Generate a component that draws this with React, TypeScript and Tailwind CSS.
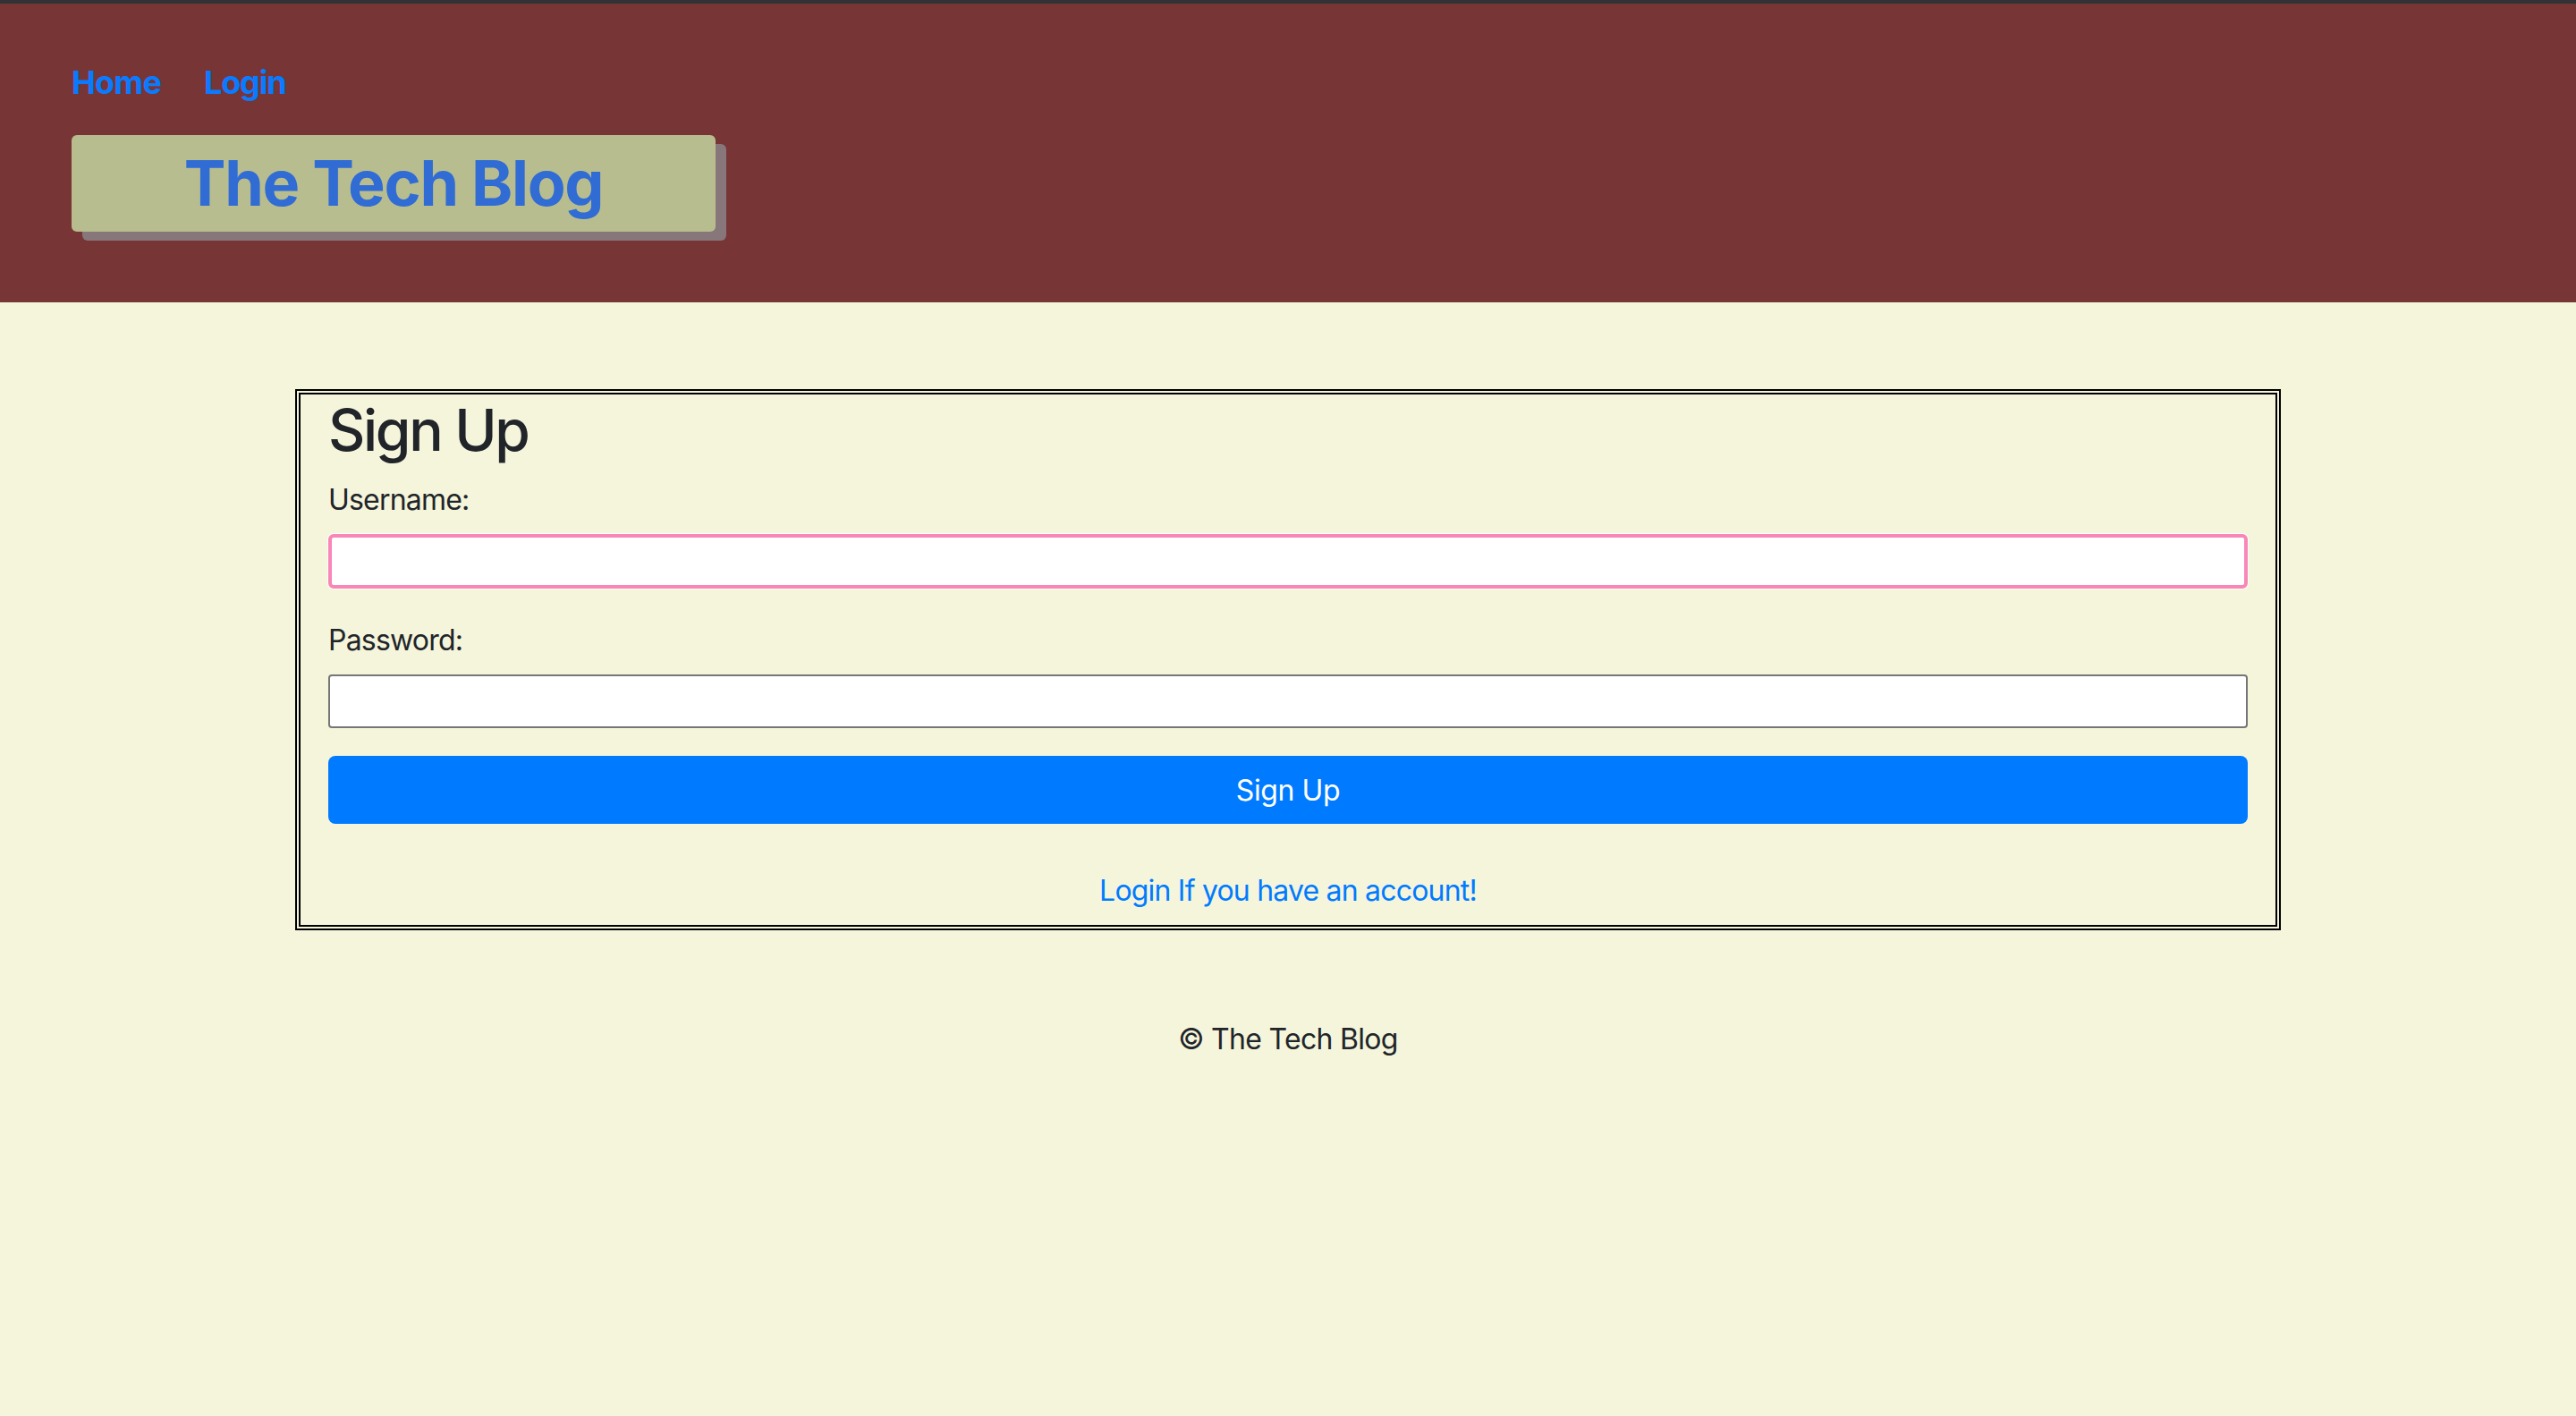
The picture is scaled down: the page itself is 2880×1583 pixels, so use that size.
import React from "react";

export default function App() {
  return (
    <div
      className="min-h-screen w-full bg-[#f5f5dc] text-[#212529]"
      style={{ fontFamily: "Inter, 'Noto Sans', sans-serif" }}
    >
      <div className="h-[4px] bg-[#303236]" />
      <header className="h-[334px] bg-[#773536] pl-[80px] pt-[61px]">
        <nav className="flex gap-[48px] text-[36px] leading-[54px] font-bold text-[#0a7bff]">
          <a href="#" className="tracking-[-0.8px]">Home</a>
          <a href="#" className="tracking-[-1.2px]">Login</a>
        </nav>
        <div className="mt-[32px] flex h-[108px] w-[720px] items-center justify-center rounded-[6px] bg-[#b8bd8f] shadow-[12px_10px_0_#87777b]">
          <h1 className="text-[70px] font-bold leading-none tracking-[-1.3px] text-[#306cd4]">
            The Tech Blog
          </h1>
        </div>
      </header>

      <main className="pt-[97px]">
        <form className="mx-auto w-[2220px] border-[6px] border-double border-black px-[31px]">
          <h2 className="mt-[2px] mb-[15px] text-[64px] font-medium leading-[1.2] tracking-[-2.3px]">
            Sign Up
          </h2>
          <label className="mb-[14px] block text-[32px] leading-[48px] tracking-[-0.8px]">Username:</label>
          <input
            type="text"
            className="box-border block h-[61px] w-full rounded-[6px] border-[4px] border-[#f887b6] bg-white shadow-[0_0_0_1px_#ffffff] outline-none"
          />
          <label className="mt-[34px] mb-[14px] block text-[32px] leading-[48px] tracking-[-0.8px]">Password:</label>
          <input
            type="password"
            className="box-border block h-[60px] w-full rounded-[4px] border-[2px] border-[#767676] bg-white outline-none"
          />
          <button
            type="button"
            className="mt-[31px] block h-[76px] w-full rounded-[8px] bg-[#007bff] pt-[3px] text-[32px] tracking-[-0.4px] text-white"
          >
            Sign Up
          </button>
          <p className="mt-[51px] mb-[14px] text-center text-[32px] leading-[48px] tracking-[-0.8px]">
            <a href="#" className="text-[#007bff]">Login If you have an account!</a>
          </p>
        </form>
        <footer className="mt-[98px] text-center text-[32px] leading-[48px] tracking-[-0.7px]">© The Tech Blog</footer>
      </main>
    </div>
  );
}
